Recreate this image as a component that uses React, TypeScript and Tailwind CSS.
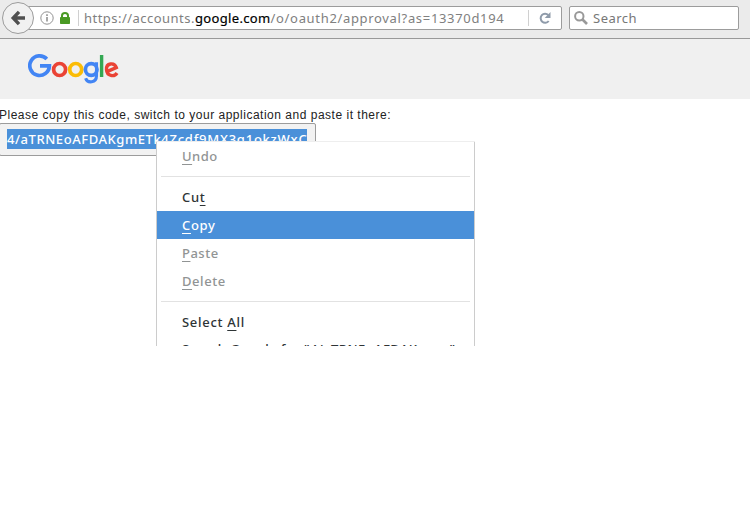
import type { ReactNode } from "react";

function GoogleLogo() {
  return (
    <svg role="img" aria-label="Google" className="block h-[32px] w-[92px]" viewBox="28 53 92 32" fill="none" strokeWidth="3.7">
      <path stroke="#4285f4" d="M46.8 59A9.8 9.8 0 1 0 49.4 65.9H40" />
      <circle stroke="#ea4335" cx="59.6" cy="69.5" r="6" />
      <circle stroke="#fbbc05" cx="75.7" cy="69.5" r="6" />
      <circle stroke="#4285f4" cx="91.2" cy="69.5" r="5.8" />
      <path stroke="#4285f4" d="M96.5 62.2V75.8C96.5 83.2 87.4 83.6 85.6 78.3" strokeWidth="3.1" />
      <path stroke="#34a853" d="M101.6 55V77" strokeWidth="3.4" />
      <path stroke="#ea4335" d="M106.4 71.9L116.3 67.6C114.3 62 106 62.9 106.5 69.7C106.9 76.3 114.3 77.3 117 73" strokeWidth="3.4" />
    </svg>
  );
}

interface MenuItemProps {
  children: ReactNode;
  tone?: string;
  spacing?: string;
}

function MenuItem({ children, tone = "text-[#2e3436]", spacing = "tracking-[0.7px]" }: MenuItemProps) {
  return <div className={`h-7 pl-[25px] text-[13px] leading-[28px] font-medium whitespace-nowrap ${spacing} ${tone}`}>{children}</div>;
}

function Key({ children }: { children: string }) {
  return <span className="underline decoration-1 underline-offset-[3px]">{children}</span>;
}

function Divider() {
  return <div className="mx-1 mt-[6px] mb-[6px] h-px bg-[#e2e2e2]" />;
}

export default function App() {
  return (
    <div className="relative h-[522px] w-[750px] overflow-hidden bg-white font-['Noto_Sans',sans-serif]">
      <header className="flex h-[39px] items-start border-b border-[#999] bg-[#ebebeb] pl-[2px]">
        <button aria-label="Back" className="z-10 mt-[2px] flex size-8 shrink-0 items-center justify-center rounded-full border border-[#9c9c9c] bg-[#f1f1f1]">
          <svg className="size-4" viewBox="0 0 16 16" fill="none" stroke="#505050" strokeWidth="3.4">
            <path d="M9 1.8L3.2 8L9 14.2M3.5 8H15" />
          </svg>
        </button>
        <div className="mt-[6px] -ml-[6px] flex h-6 w-[534px] items-center rounded-r-[2px] border border-[#9c9c9c] bg-white pl-[11px]">
          <svg className="size-[14px] shrink-0" viewBox="0 0 14 14" fill="none" stroke="#929292">
            <circle cx="7" cy="7" r="6.2" />
            <path strokeWidth="1.6" d="M7 6V10.5M7 3.3V4.9" />
          </svg>
          <svg className="ml-[6px] h-3 w-[10px] shrink-0" viewBox="0 0 10 12" fill="none">
            <rect y="5" width="10" height="7" rx="0.8" fill="#4a9a24" />
            <path stroke="#4a9a24" strokeWidth="2" d="M2 6V3.7Q2 1 5 1T8 3.7V6" />
          </svg>
          <div className="ml-[8px] h-4 w-px shrink-0 bg-[#d0d0d0]" />
          <div className="ml-[5px] w-[444px] shrink-0 text-[13px] leading-[20px] tracking-[0.47px] whitespace-nowrap text-[#808080]">
            https://accounts.<span className="tracking-[0.35px] text-black [-webkit-text-stroke:0.2px_black]">google.com</span><span className="tracking-[0.67px]">/o/oauth2/approval?as=13370d194</span>
          </div>
          <div className="h-4 w-px shrink-0 bg-[#d0d0d0]" />
          <svg className="ml-[10px] size-3 shrink-0" viewBox="0 0 12 12" fill="none">
            <path stroke="#8f9baa" strokeWidth="2" d="M9.3 3A4.5 4.5 0 1 0 9.7 9" />
            <path fill="#8f9baa" d="M11.5 0V6H5.7Z" />
          </svg>
        </div>
        <div className="mt-[6px] ml-[7px] flex h-6 w-[170px] items-center rounded-[2px] border border-[#9c9c9c] bg-white pt-px pl-[4px] text-[13px] tracking-[0.5px] text-[#777]">
          <svg className="mr-[5px] mb-[2px] size-[14px]" viewBox="0 0 14 14" fill="none" stroke="#999" strokeWidth="2">
            <circle cx="5.3" cy="5.3" r="4.2" />
            <path strokeWidth="2.6" d="M8.5 8.5L13 13" />
          </svg>
          Search
        </div>
      </header>
      <div className="h-[60px] bg-[#f0f0f0] pt-[14px] pl-[28px]">
        <GoogleLogo />
      </div>
      <main className="pt-[8px]">
        <p className="-ml-px h-4 font-['Liberation_Sans',sans-serif] text-[12px] leading-[17px] tracking-[0.51px] whitespace-nowrap text-[#222]">
          Please copy this code, switch to your application and paste it there:
        </p>
        <div className="-ml-px flex h-[33px] w-[317px] items-start rounded-[2px] border border-[#9c9c9c] bg-[#f2f2f2] pt-[5px] pl-[7px]">
          <span className="block h-5 w-[300px] bg-[#4a90d9] text-[13px] leading-[21px] font-medium tracking-[0.56px] whitespace-nowrap text-white">
            4/aTRNEoAFDAKgmETk<span className="tracking-[0.76px]">4Zcdf9MX3q1okzWxC</span>
          </span>
        </div>
      </main>
      <div className="absolute top-[142px] left-[156px] h-[204px] w-[319px] overflow-hidden border-x border-[#ccc] bg-white shadow-[0_-1px_0_#eee]">
        <MenuItem tone="text-[#919494]" spacing="tracking-[0.5px]"><Key>U</Key>ndo</MenuItem>
        <Divider />
        <MenuItem>Cu<Key>t</Key></MenuItem>
        <MenuItem tone="bg-[#4a90d9] text-white"><Key>C</Key>opy</MenuItem>
        <MenuItem tone="text-[#919494]" spacing="tracking-[0.5px]"><Key>P</Key>aste</MenuItem>
        <MenuItem tone="text-[#919494]" spacing="tracking-[0.55px]"><Key>D</Key>elete</MenuItem>
        <Divider />
        <MenuItem>Select <Key>A</Key>ll</MenuItem>
        <div className="-mt-px">
          <MenuItem spacing="tracking-[0.42px]">Search Google for "4/aTRNEoAFDAKgm…"</MenuItem>
        </div>
      </div>
    </div>
  );
}
